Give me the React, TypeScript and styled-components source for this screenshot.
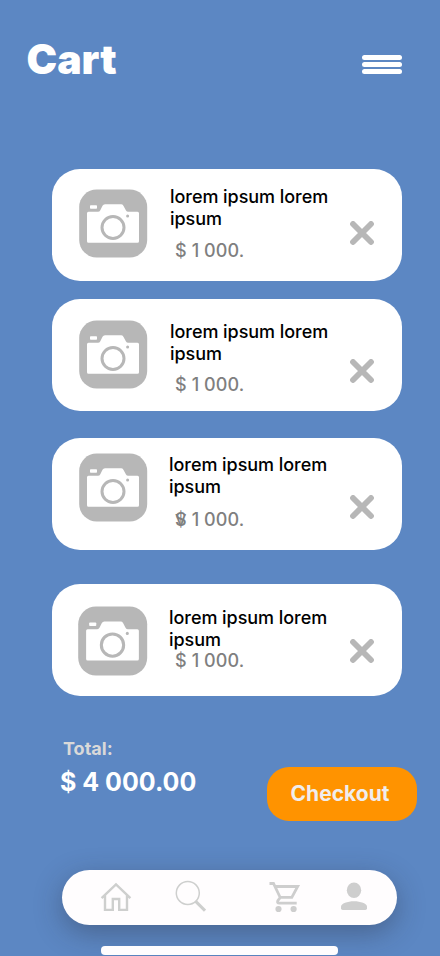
import React from "react";
import styled, { createGlobalStyle } from "styled-components";

const GlobalStyle = createGlobalStyle`
  * { box-sizing: border-box; }
  body { margin: 0; background: #5c87c3; overflow: hidden; }
`;

const Screen = styled.main`
  width: 440px;
  height: 956px;
  overflow: hidden;
  background: #5c87c3;
  font-family: "Inter", sans-serif;
  display: flex;
  flex-direction: column;
`;

const Header = styled.header`
  height: 169px;
  padding: 35px 38px 0 26.5px;
  display: flex;
  align-items: flex-start;
  justify-content: space-between;
`;

const PageTitle = styled.h1`
  margin: 0;
  font-size: 41px;
  line-height: 48px;
  font-weight: 900;
  color: #fff;
`;

const MenuButton = styled.button`
  width: 40px;
  margin: 20px 0 0;
  padding: 0;
  border: 0;
  background: none;
  display: flex;
  flex-direction: column;
  gap: 2px;
`;

const MenuBar = styled.span`
  height: 5px;
  border-radius: 2.5px;
  background: #fff;
`;

const CartList = styled.ul`
  list-style: none;
  margin: 0;
  padding: 0 38px 0 52px;
`;

const Card = styled.li<{ $gap: number }>`
  height: 112px;
  margin-top: ${(p) => p.$gap}px;
  border-radius: 28px;
  background: #fff;
  display: flex;
  align-items: flex-start;
`;

const Thumb = styled.svg<{ $top: number; $grow: number }>`
  flex: none;
  width: ${(p) => 69 + p.$grow}px;
  height: ${(p) => 69 + p.$grow}px;
  margin: ${(p) => p.$top}px -1px 0 ${(p) => 27 - p.$grow}px;
`;

const Info = styled.div<{ $left: number; $top: number }>`
  width: ${(p) => 203 - p.$left}px;
  margin: ${(p) => p.$top}px 0 0 ${(p) => p.$left}px;
`;

const ItemName = styled.p`
  width: 170px;
  margin: 0;
  font-size: 18px;
  line-height: 22px;
  font-weight: 500;
  letter-spacing: -0.05px;
  color: #000;
`;

const Price = styled.p<{ $top: number; $left: number }>`
  position: relative;
  margin: ${(p) => p.$top}px 0 0 ${(p) => p.$left}px;
  font-size: 18px;
  line-height: 22px;
  font-weight: 500;
  letter-spacing: 0.1px;
  color: #7f7f7f;
  white-space: nowrap;
`;

const Overprint = styled.span`
  position: absolute;
  left: 0;
  top: 0;
  font-size: 16px;
`;

const Remove = styled.button<{ $top: number }>`
  width: 24px;
  height: 24px;
  margin: ${(p) => p.$top}px 0 0;
  padding: 0;
  border: 0;
  background: none;
  svg { display: block; }
`;

const Summary = styled.section`
  height: 174px;
  padding: 42px 23px 0 60px;
  display: flex;
  justify-content: space-between;
  align-items: flex-start;
`;

const TotalLabel = styled.div`
  padding-left: 3px;
  font-size: 18px;
  line-height: 22px;
  font-weight: 700;
  color: #d9d9d9;
`;

const TotalValue = styled.div`
  margin-top: 7px;
  font-size: 25px;
  line-height: 30px;
  font-weight: 700;
  color: #fff;
  white-space: nowrap;
`;

const Checkout = styled.button`
  width: 150px;
  height: 54px;
  margin: 29px 0 0;
  padding: 0 4px 0 0;
  border: 0;
  border-radius: 22px;
  background: #ff9300;
  color: #f0eded;
  font: 700 21px/26px "Inter", sans-serif;
`;

const NavBar = styled.nav`
  flex: none;
  width: 335px;
  height: 55px;
  margin-left: 62px;
  padding: 10px 0 0 38px;
  border-radius: 27.5px;
  background: #fffdfe;
  box-shadow: 0 8px 28px rgba(40, 40, 50, 0.36);
  display: flex;
  align-items: flex-start;
`;

const NavIcon = styled.svg<{ $space: number }>`
  flex: none;
  width: 32px;
  height: 33px;
  margin-right: ${(p) => p.$space}px;
`;

const HomeIndicator = styled.div`
  flex: none;
  width: 237px;
  height: 9px;
  margin: 21px 0 0 101px;
  border-radius: 4px;
  background: #fffdfe;
`;

type Item = {
  gap: number;
  thumb: number;
  grow: number;
  left: number;
  text: number;
  price: number;
  close: number;
  overprint?: string;
};

const items: Item[] = [
  { gap: 0, thumb: 20, grow: 0, left: 23, text: 17, price: 10, close: 52 },
  { gap: 18, thumb: 21, grow: 0, left: 23, text: 22, price: 9, close: 60 },
  { gap: 27, thumb: 15, grow: 0, left: 22, text: 16, price: 11, close: 57, overprint: "V" },
  { gap: 34, thumb: 22, grow: 1, left: 22, text: 23, price: -1, close: 55 },
];

const CartItem = ({ item }: { item: Item }) => (
  <Card $gap={item.gap}>
    <Thumb $top={item.thumb} $grow={item.grow} viewBox="0 0 69 69">
      <rect x="0.2" y="0.5" width="68" height="68" rx="17.5" fill="#b7b7b7" />
      <rect x="11" y="16.3" width="7" height="3.5" rx="0.8" fill="#fff" />
      <path
        d="M9.5 22.8H19Q20.5 22.8 21.3 21.3L23.5 16.8Q24.3 15.3 26 15.3H42Q43.6 15.3 44.4 16.7L47 21.6Q47.7 22.8 49.2 22.8H58.5Q60 22.8 60 24.3V52.3Q60 53.8 58.5 53.8H9.5Q8 53.8 8 52.3V24.3Q8 22.8 9.5 22.8Z"
        fill="#fff"
      />
      <circle cx="34" cy="38.5" r="11" fill="none" stroke="#b7b7b7" strokeWidth="3" />
      <circle cx="48.6" cy="27" r="1.5" fill="#b7b7b7" />
    </Thumb>
    <Info $left={item.left} $top={item.text}>
      <ItemName>lorem ipsum lorem ipsum</ItemName>
      <Price $top={item.price} $left={28 - item.left}>
        $ 1 000.
        {item.overprint && <Overprint>{item.overprint}</Overprint>}
      </Price>
    </Info>
    <Remove $top={item.close} aria-label="Remove">
      <svg width="24" height="24" viewBox="0 0 24 24">
        <path d="M3 3L21 21M21 3L3 21" stroke="#b7b7b7" strokeWidth="5.8" strokeLinecap="round" />
      </svg>
    </Remove>
  </Card>
);

export default function App() {
  return (
    <Screen>
      <GlobalStyle />
      <Header>
        <PageTitle>Cart</PageTitle>
        <MenuButton aria-label="Menu">
          <MenuBar />
          <MenuBar />
          <MenuBar />
        </MenuButton>
      </Header>
      <CartList>
        {items.map((item, i) => (
          <CartItem key={i} item={item} />
        ))}
      </CartList>
      <Summary>
        <div>
          <TotalLabel>Total:</TotalLabel>
          <TotalValue>$ 4 000.00</TotalValue>
        </div>
        <Checkout>Checkout</Checkout>
      </Summary>
      <NavBar>
        <NavIcon $space={42} viewBox="0 0 32 33">
          <path
            d="M1.6 18.2L16 4.4L30.4 18.2M5 15.5V29.9H12.8V19H19.2V29.9H27V15.5"
            fill="none" stroke="#cecfce" strokeWidth="2.4"
          />
        </NavIcon>
        <NavIcon $space={63} viewBox="0 0 32 33">
          <circle cx="13.8" cy="13" r="11.5" fill="none" stroke="#cecfce" strokeWidth="1.5" />
          <path d="M21.7 21.4L31 30.7" fill="none" stroke="#cecfce" strokeWidth="3" />
        </NavIcon>
        <NavIcon $space={36} viewBox="0 0 32 33">
          <path
            d="M0.5 3.5H4.5L11.2 17.5L8.8 20.7Q7.8 23.2 10.3 23.2H27.7M6.8 6.5H28.7L22.8 17.3H11.2"
            fill="none" stroke="#cecece" strokeWidth="2.8"
          />
          <circle cx="9.5" cy="29" r="3.1" fill="#cecece" />
          <circle cx="24.6" cy="29" r="3.1" fill="#cecece" />
        </NavIcon>
        <NavIcon $space={0} viewBox="0 0 32 33">
          <ellipse cx="17" cy="10.3" rx="7.2" ry="7.8" fill="#cecece" />
          <path d="M4 26.5C4 23.5 10.5 21.2 17 21.2S30 23.5 30 26.5V28.3Q30 30 28.3 30H5.7Q4 30 4 28.3Z" fill="#cecece" />
        </NavIcon>
      </NavBar>
      <HomeIndicator />
    </Screen>
  );
}
